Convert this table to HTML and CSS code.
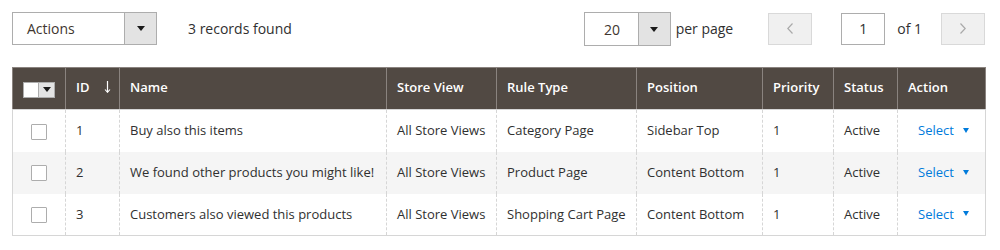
FILE: index.html
```html
<!DOCTYPE html>
<html>
<head>
<meta charset="utf-8">
<link rel="stylesheet" href="styles.css">
</head>
<body>
<div class="page">
  <div class="toolbar">
    <div class="left">
      <div class="select actions">
        <span class="select-label">Actions</span>
        <span class="select-btn"><span class="tri"></span></span>
      </div>
      <span class="count">3 records found</span>
    </div>
    <div class="right">
      <div class="select perpage">
        <span class="select-label">20</span>
        <span class="select-btn"><span class="tri"></span></span>
      </div>
      <span class="perpage-text">per page</span>
      <span class="pager-btn prev"><svg width="6" height="11" viewBox="0 0 6 11"><path d="M5.5 0.5 L0.8 5.5 L5.5 10.5" fill="none" stroke="#a9a9a9" stroke-width="1.2"/></svg></span>
      <span class="page-input">1</span>
      <span class="of">of 1</span>
      <span class="pager-btn next"><svg width="6" height="11" viewBox="0 0 6 11"><path d="M0.5 0.5 L5.2 5.5 L0.5 10.5" fill="none" stroke="#a9a9a9" stroke-width="1.2"/></svg></span>
    </div>
  </div>

  <table class="grid">
    <colgroup>
      <col class="c-check"><col class="c-id"><col class="c-name"><col class="c-store"><col class="c-rule"><col class="c-pos"><col class="c-prio"><col class="c-status"><col class="c-action">
    </colgroup>
    <thead>
      <tr>
        <th class="th-check"><span class="multi"><span class="multi-box"></span><span class="multi-btn"><span class="tri"></span></span></span></th>
        <th><span class="id-head">ID <svg class="sort" width="7" height="12" viewBox="0 0 7 12"><path d="M3.5 0 V11" stroke="#fff" stroke-width="1.2"/><path d="M1 8.5 L3.5 11.3 L6 8.5" fill="none" stroke="#fff" stroke-width="1.1"/></svg></span></th>
        <th>Name</th>
        <th>Store View</th>
        <th>Rule Type</th>
        <th>Position</th>
        <th>Priority</th>
        <th>Status</th>
        <th>Action</th>
      </tr>
    </thead>
    <tbody>
      <tr>
        <td class="td-check"><span class="cb"></span></td>
        <td>1</td>
        <td>Buy also this items</td>
        <td>All Store Views</td>
        <td>Category Page</td>
        <td>Sidebar Top</td>
        <td>1</td>
        <td>Active</td>
        <td><span class="sel-link">Select<span class="btri"></span></span></td>
      </tr>
      <tr class="alt">
        <td class="td-check"><span class="cb"></span></td>
        <td>2</td>
        <td>We found other products you might like!</td>
        <td>All Store Views</td>
        <td>Product Page</td>
        <td>Content Bottom</td>
        <td>1</td>
        <td>Active</td>
        <td><span class="sel-link">Select<span class="btri"></span></span></td>
      </tr>
      <tr>
        <td class="td-check"><span class="cb"></span></td>
        <td>3</td>
        <td>Customers also viewed this products</td>
        <td>All Store Views</td>
        <td>Shopping Cart Page</td>
        <td>Content Bottom</td>
        <td>1</td>
        <td>Active</td>
        <td><span class="sel-link">Select<span class="btri"></span></span></td>
      </tr>
    </tbody>
  </table>
</div>
</body>
</html>
```

FILE: styles.css
```css
* { box-sizing: border-box; }
html, body { margin: 0; padding: 0; background: #fff; }
body {
  font-family: "Open Sans", "Liberation Sans", sans-serif;
  color: #303030;
  font-size: 14px;
}
.page {
  width: 985px;
  padding: 12px 0 0 12px;
}
.toolbar {
  display: flex;
  justify-content: space-between;
  align-items: center;
  height: 33px;
}
.left, .right {
  display: flex;
  align-items: center;
}
.select {
  display: flex;
  height: 33px;
  border: 1px solid #adadad;
  background: #fff;
}
.select-label {
  flex: 1;
  display: flex;
  align-items: center;
  color: #41362f;
}
.select-btn {
  width: 32px;
  background: #e3e3e3;
  border-left: 1px solid #adadad;
  display: flex;
  align-items: center;
  justify-content: center;
}
.tri {
  width: 0;
  height: 0;
  border-left: 4.5px solid transparent;
  border-right: 4.5px solid transparent;
  border-top: 5px solid #1a1a1a;
}
.actions { width: 145px; }
.actions .select-label { padding-left: 14px; }
.count { margin-left: 31px; }
.perpage { width: 87px; height: 34px; margin-top: 1px; }
.perpage .select-label { justify-content: center; padding-left: 2px; }
.perpage-text { margin-left: 5px; }
.pager-btn {
  width: 44px;
  height: 32px;
  background: #f0f0f0;
  border: 1px solid #d9d9d9;
  display: flex;
  align-items: center;
  justify-content: center;
}
.prev { margin-left: 35px; }
.page-input {
  margin-left: 29px;
  width: 44px;
  height: 32px;
  border: 1px solid #adadad;
  display: flex;
  align-items: center;
  justify-content: center;
}
.of { margin-left: 12px; margin-right: 19px; }

.grid {
  margin-top: 22px;
  width: 973px;
  border-collapse: collapse;
  table-layout: fixed;
  border: 1px solid #d6d6d6;
}
.c-check { width: 53px; }
.c-id { width: 54px; }
.c-name { width: 267px; }
.c-store { width: 110px; }
.c-rule { width: 140px; }
.c-pos { width: 126px; }
.c-prio { width: 71px; }
.c-status { width: 64px; }
.c-action { width: 88px; }
.grid thead tr { height: 42px; }
.grid th {
  background: #514943;
  color: #fff;
  font-weight: 600;
  font-size: 13px;
  text-align: left;
  padding: 0 10px 3px;
  border: 1px solid #8a837f;
  border-bottom-color: #d6d6d6;
  vertical-align: middle;
  white-space: nowrap;
}
.grid th.th-check { padding-bottom: 0; }
.grid tbody tr { height: 42px; }
.grid td {
  font-size: 13px;
  padding: 0 10px 1px;
  border-left: 1px dashed #d6d6d6;
  border-right: 1px dashed #d6d6d6;
  vertical-align: middle;
  white-space: nowrap;
}
.grid tr.alt td { background: #f5f5f5; }
.th-check, .td-check { text-align: center !important; }
.multi {
  display: inline-flex;
  vertical-align: middle;
  height: 16px;
  border: 1px solid #adadad;
}
.multi-box { width: 14px; background: #fff; }
.multi-btn {
  width: 16px;
  background: #e3e3e3;
  border-left: 1px solid #adadad;
  display: flex;
  align-items: center;
  justify-content: center;
}
.multi-btn .tri {
  border-left-width: 4px;
  border-right-width: 4px;
  border-top-width: 5px;
}
.id-head { display: inline-flex; align-items: center; }
.sort { margin-left: 14px; }
.cb {
  display: inline-block;
  vertical-align: middle;
  width: 16px;
  height: 16px;
  border: 1px solid #adadad;
  background: #fff;
  border-radius: 1px;
}
.sel-link {
  color: #007bdb;
  padding-left: 10px;
  display: inline-flex;
  align-items: center;
}
.btri {
  margin-left: 9px;
  width: 0;
  height: 0;
  border-left: 3.5px solid transparent;
  border-right: 3.5px solid transparent;
  border-top: 5px solid #007bdb;
}
```
